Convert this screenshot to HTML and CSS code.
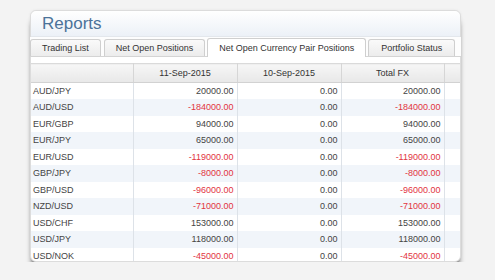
FILE: index.html
```html
<!DOCTYPE html>
<html lang="en">
<head>
  <meta charset="UTF-8" />
  <title>Reports</title>
  <link rel="stylesheet" href="styles.css">
</head>
<body>

  <div class="panel">
    <div class="panel-head">
      <h1>Reports</h1>
    </div>

    <div class="tabs">
      <div class="tab">Trading List</div>
      <div class="tab">Net Open Positions</div>
      <div class="tab active">Net Open Currency Pair Positions</div>
      <div class="tab">Portfolio Status</div>
    </div>

    <div class="table-wrap">
      <table class="report">
        <colgroup>
          <col class="c-pair">
          <col class="c-num">
          <col class="c-num">
          <col class="c-tot">
          <col>
        </colgroup>
        <thead>
          <tr>
            <th></th>
            <th>11-Sep-2015</th>
            <th>10-Sep-2015</th>
            <th>Total FX</th>
            <th class="spacer"></th>
          </tr>
        </thead>
        <tbody>
          <tr><td>AUD/JPY</td><td>20000.00</td><td>0.00</td><td>20000.00</td><td></td></tr>
          <tr><td>AUD/USD</td><td class="neg">-184000.00</td><td>0.00</td><td class="neg">-184000.00</td><td></td></tr>
          <tr><td>EUR/GBP</td><td>94000.00</td><td>0.00</td><td>94000.00</td><td></td></tr>
          <tr><td>EUR/JPY</td><td>65000.00</td><td>0.00</td><td>65000.00</td><td></td></tr>
          <tr><td>EUR/USD</td><td class="neg">-119000.00</td><td>0.00</td><td class="neg">-119000.00</td><td></td></tr>
          <tr><td>GBP/JPY</td><td class="neg">-8000.00</td><td>0.00</td><td class="neg">-8000.00</td><td></td></tr>
          <tr><td>GBP/USD</td><td class="neg">-96000.00</td><td>0.00</td><td class="neg">-96000.00</td><td></td></tr>
          <tr><td>NZD/USD</td><td class="neg">-71000.00</td><td>0.00</td><td class="neg">-71000.00</td><td></td></tr>
          <tr><td>USD/CHF</td><td>153000.00</td><td>0.00</td><td>153000.00</td><td></td></tr>
          <tr><td>USD/JPY</td><td>118000.00</td><td>0.00</td><td>118000.00</td><td></td></tr>
          <tr><td>USD/NOK</td><td class="neg">-45000.00</td><td>0.00</td><td class="neg">-45000.00</td><td></td></tr>
        </tbody>
      </table>
    </div>
  </div>

</body>
</html>
```

FILE: styles.css
```css
* {
  box-sizing: border-box;
}

body {
  margin: 0;
  background: #f3f3f3;
  font-family: 'Liberation Sans', Arial, sans-serif;
  font-size: 9px;
  color: #3a3a3a;
}

.panel {
  width: 431px;
  height: 252px;
  margin: 10px 0 0 30px;
  background: #fff;
  border: 1px solid #dcdcdc;
  border-radius: 6px;
  box-shadow: 0 9px 6px -3px rgba(0,0,0,0.8), 0 0 3px rgba(0,0,0,0.06);
}

.panel-head {
  height: 26px;
  padding-left: 11px;
  border-radius: 6px 6px 0 0;
  background: linear-gradient(to bottom, #ffffff, #ecf1f7);
  border-bottom: 1px solid #e3e7ec;
}

.panel-head h1 {
  margin: 0;
  font-size: 17px;
  font-weight: normal;
  line-height: 25px;
  color: #4b7299;
}

.tabs {
  display: flex;
  align-items: flex-end;
  height: 20px;
  margin: 0 -1px;
  background: #fdfdfd;
  border-bottom: 1px solid #d4d4d4;
}

.tab {
  flex-shrink: 0;
  height: 17px;
  margin-right: 2px;
  padding: 0 11px;
  line-height: 16px;
  white-space: nowrap;
  color: #333;
  background: linear-gradient(to bottom, #fafafa, #ececec);
  border: 1px solid #cfcfcf;
  border-bottom: none;
  border-radius: 3px 3px 0 0;
}

.tab:first-child {
  margin-right: 3px;
}

.tab:last-child {
  padding: 0 12px;
}

.tab.active {
  height: 19px;
  margin-bottom: -1px;
  padding: 0 11px;
  background: #fff;
  line-height: 18px;
}

.table-wrap {
  height: 204px;
  padding-top: 6px;
  overflow: hidden;
  border-radius: 0 0 6px 6px;
}

.report {
  width: 100%;
  border-collapse: collapse;
  table-layout: fixed;
}

.c-pair { width: 102px; }
.c-num { width: 104px; }
.c-tot { width: 103px; }

.report th {
  height: 19px;
  padding: 0;
  font-weight: normal;
  white-space: nowrap;
  color: #333;
  text-align: center;
  background: linear-gradient(to bottom, #f6f6f6, #e8e8e8);
  border-top: 1px solid #dadada;
  border-bottom: 1px solid #d2d2d2;
  border-right: 1px solid #d6d6d6;
}

.report th.spacer {
  border-right: none;
}

.report td {
  height: 16.5px;
  padding: 0 3px;
  white-space: nowrap;
  text-align: right;
  color: #444;
  border-right: 1px solid #dde2e8;
}

.report td:first-child {
  text-align: left;
  padding-left: 2px;
}

.report td:last-child {
  border-right: none;
}

.report tbody tr:nth-child(even) td {
  background: #f1f5fa;
}

.report td.neg {
  color: #e2343f;
}
```
